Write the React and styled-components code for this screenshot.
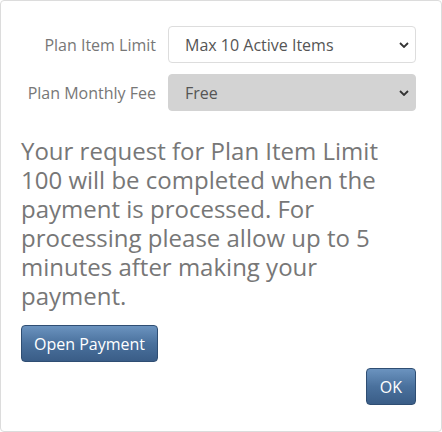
import React from "react";
import styled, { createGlobalStyle } from "styled-components";

const GlobalStyle = createGlobalStyle`
  html, body {
    margin: 0;
    padding: 0;
    background: #fff;
    font-family: "Open Sans", "Liberation Sans", sans-serif;
  }
`;

const Panel = styled.div`
  box-sizing: border-box;
  width: 442px;
  height: 432px;
  border: 1px solid #dcdcdc;
  border-radius: 4px;
  padding: 25px 25px 0 20px;
  display: flex;
  flex-direction: column;
`;

const Form = styled.div`
  display: grid;
  grid-template-columns: 135px 1fr;
  column-gap: 12px;
  row-gap: 11px;
  align-items: center;
`;

const Label = styled.label`
  text-align: right;
  font-size: 16px;
  color: #777;
  white-space: nowrap;
`;

const chevron = encodeURIComponent(
  `<svg xmlns="http://www.w3.org/2000/svg" width="10" height="6" viewBox="0 0 10 6"><path d="M1 1l4 4 4-4" fill="none" stroke="#333" stroke-width="1.8"/></svg>`
);

const Select = styled.select`
  box-sizing: border-box;
  appearance: none;
  width: 100%;
  height: 37px;
  padding: 0 30px 0 16px;
  font-family: inherit;
  font-size: 16px;
  color: #555;
  border: 1px solid ${p => (p.disabled ? "#d3d3d3" : "#ddd")};
  border-radius: 4px;
  background: ${p => (p.disabled ? "#d3d3d3" : "#fff")} url("data:image/svg+xml;utf8,${chevron}") no-repeat right 6px center;
  outline: none;
  &:disabled { opacity: 1; color: #555; }
`;

const Message = styled.p`
  margin: 25px 0 15px 0;
  font-size: 24px;
  line-height: 29px;
  color: #777;
`;

const Button = styled.button`
  box-sizing: border-box;
  height: 37px;
  padding: 0 ${p => p.pad || "12px"};
  font-family: inherit;
  font-size: 16px;
  color: #fff;
  border: 1px solid #2f4e73;
  border-radius: 4px;
  background: linear-gradient(to bottom, #6b93bf 0%, #4a719d 50%, #3a5d87 100%);
  cursor: pointer;
`;

const Left = styled.div`
  display: flex;
`;

const Right = styled.div`
  display: flex;
  justify-content: flex-end;
  margin-top: 6px;
`;

export default function App() {
  return (
    <>
      <GlobalStyle />
      <Panel>
        <Form>
          <Label>Plan Item Limit</Label>
          <Select defaultValue="10">
            <option value="10">Max 10 Active Items</option>
            <option value="100">Max 100 Active Items</option>
          </Select>
          <Label>Plan Monthly Fee</Label>
          <Select disabled defaultValue="free">
            <option value="free">Free</option>
          </Select>
        </Form>
        <Message>
          Your request for Plan Item Limit 100 will be completed when the
          payment is processed. For processing please allow up to 5 minutes
          after making your payment.
        </Message>
        <Left>
          <Button>Open Payment</Button>
        </Left>
        <Right>
          <Button pad="13px">OK</Button>
        </Right>
      </Panel>
    </>
  );
}
